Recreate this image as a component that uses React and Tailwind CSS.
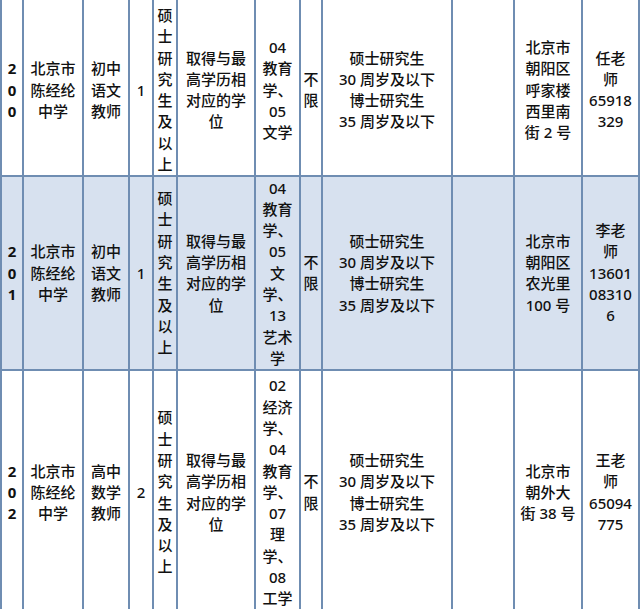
const widths = [22, 60, 46, 24, 24, 78, 45, 22, 130, 62, 68, 57];

const rows = [
  {
    bg: "bg-white",
    h: "h-[174px]",
    pad: "pt-[5px]",
    cells: [
      ["2", "0", "0"],
      ["北京市", "陈经纶", "中学"],
      ["初中", "语文", "教师"],
      ["1"],
      ["硕", "士", "研", "究", "生", "及", "以", "上"],
      ["取得与最", "高学历相", "对应的学", "位"],
      ["04", "教育", "学、", "05", "文学"],
      ["不", "限"],
      ["硕士研究生", "30 周岁及以下", "博士研究生", "35 周岁及以下"],
      [],
      ["北京市", "朝阳区", "呼家楼", "西里南", "街 2 号"],
      ["任老", "师", "65918", "329"],
    ],
  },
  {
    bg: "bg-[#d7e1ef]",
    h: "h-[194px]",
    pad: "pt-0",
    cells: [
      ["2", "0", "1"],
      ["北京市", "陈经纶", "中学"],
      ["初中", "语文", "教师"],
      ["1"],
      ["硕", "士", "研", "究", "生", "及", "以", "上"],
      ["取得与最", "高学历相", "对应的学", "位"],
      ["04", "教育", "学、", "05", "文", "学、", "13", "艺术", "学"],
      ["不", "限"],
      ["硕士研究生", "30 周岁及以下", "博士研究生", "35 周岁及以下"],
      [],
      ["北京市", "朝阳区", "农光里", "100 号"],
      ["李老", "师", "13601", "08310", "6"],
    ],
  },
  {
    bg: "bg-white",
    h: "h-[238px]",
    pad: "pt-[4px]",
    cells: [
      ["2", "0", "2"],
      ["北京市", "陈经纶", "中学"],
      ["高中", "数学", "教师"],
      ["2"],
      ["硕", "士", "研", "究", "生", "及", "以", "上"],
      ["取得与最", "高学历相", "对应的学", "位"],
      ["02", "经济", "学、", "04", "教育", "学、", "07", "理", "学、", "08", "工学"],
      ["不", "限"],
      ["硕士研究生", "30 周岁及以下", "博士研究生", "35 周岁及以下"],
      [],
      ["北京市", "朝外大", "街 38 号"],
      ["王老", "师", "65094", "775"],
    ],
  },
];

export default function App() {
  return (
    <div className="w-[640px] h-[609px] overflow-hidden bg-white">
      <table
        className="table-fixed border-collapse text-[15px] leading-[21.3px] text-[#111]"
        style={{ width: 639, fontFamily: '"Noto Sans", "Noto Sans CJK SC", sans-serif' }}
      >
        <colgroup>
          {widths.map((w, i) => (
            <col key={i} style={{ width: w }} />
          ))}
        </colgroup>
        <tbody>
          {rows.map((row, ri) => (
            <tr key={ri} className={`${row.bg} ${row.h}`}>
              {row.cells.map((lines, ci) => (
                <td
                  key={ci}
                  className={`border-2 border-[#6f8db2] p-0 text-center align-middle overflow-hidden whitespace-nowrap ${row.pad} ${
                    ri === 0 ? "border-t-0" : ""
                  } ${ci === 0 ? "font-bold" : "font-medium"}`}
                >
                  {lines.map((l, li) => (
                    <div key={li}>{l}</div>
                  ))}
                </td>
              ))}
            </tr>
          ))}
        </tbody>
      </table>
    </div>
  );
}
